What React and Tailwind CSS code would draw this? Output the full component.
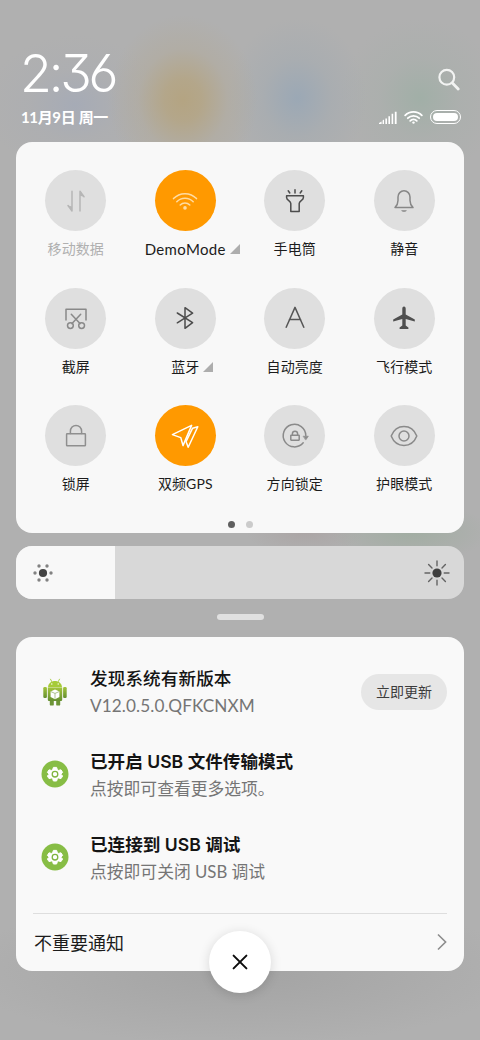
import React from 'react';

const Icon = ({ children, className }) => (
    <svg
        viewBox="0 0 30 30"
        className={`w-[30px] h-[30px] ${className}`}
        fill="none"
        stroke="currentColor"
        strokeWidth="1.5"
        strokeLinecap="round"
        strokeLinejoin="round"
    >
        {children}
    </svg>
);

const DataIcon = () => (
    <Icon className="text-[#b6b6b6]">
        <path d="M11 5.3V25L7 19.5" />
        <path d="M19 25V5.3L23 10.8" />
        <path d="M11 25L7 19.5L11 20.5ZM19 5.3L23 10.8L19 9.8Z" fill="currentColor" stroke="none" />
    </Icon>
);

const WifiIcon = () => (
    <Icon className="text-[#ffdca3]">
        <path d="M3.5 12.6A15.8 15.8 0 0 1 26.5 12.6" />
        <path d="M6.8 15.8A11.2 11.2 0 0 1 23.2 15.8" />
        <path d="M10.2 19A6.8 6.8 0 0 1 19.8 19" />
        <circle cx="15" cy="21.9" r="1.8" fill="currentColor" stroke="none" />
    </Icon>
);

const TorchIcon = () => (
    <Icon className="text-[#4c4c4c]">
        <path d="M15 3.8V7M8.2 4.8L9.8 7M21.8 4.8L20.2 7" />
        <path d="M6.6 9.8H23.4V11.4C23.4 14.6 19.2 14.6 19.2 17.6V25.6H10.8V17.6C10.8 14.6 6.6 14.6 6.6 11.4Z" />
    </Icon>
);

const BellIcon = () => (
    <Icon className="text-[#878787]">
        <path d="M6 21.6C8 19.4 9 17.4 9 14.4V11A6 6.2 0 0 1 21 11V14.4C21 17.4 22 19.4 24 21.6Z" />
        <path d="M12.2 24.2H17.8C17 26.4 13 26.4 12.2 24.2Z" fill="currentColor" stroke="none" />
    </Icon>
);

const ScissorsIcon = () => (
    <Icon className="text-[#898989]">
        <path d="M5 17V6.2H25V17" />
        <path d="M10.3 11.2L19 20.6M19.7 11.2L11 20.6" />
        <circle cx="9.4" cy="22.6" r="2.9" />
        <circle cx="20.6" cy="22.6" r="2.9" />
    </Icon>
);

const BluetoothIcon = () => (
    <Icon className="text-[#4c4c4c]">
        <path d="M7.3 10L22.6 19.6L15 25.3V4.7L22.6 10.2L7.3 19.8" />
    </Icon>
);

const AutoIcon = () => (
    <Icon className="text-[#555555]">
        <path d="M6.2 24.2L15 4.4L23.8 24.2M9.4 16.6H20.6" />
    </Icon>
);

const PlaneIcon = () => (
    <Icon className="text-[#4f4f4f]">
        <path
            d="M15 3.6C16.2 3.6 16.7 4.6 16.7 5.8V11.4L25.8 16.4V18.4L16.7 15.9V22.4L19.4 24.4V25.9H10.6V24.4L13.3 22.4V15.9L4.2 18.4V16.4L13.3 11.4V5.8C13.3 4.6 13.8 3.6 15 3.6Z"
            fill="currentColor"
            stroke="none"
        />
    </Icon>
);

const LockIcon = () => (
    <Icon className="text-[#8f8f8f]">
        <rect x="5.6" y="12.8" width="18.8" height="12" rx="0.6" />
        <path d="M9.4 12.6V10.2A5.6 5.8 0 0 1 20.6 10.2V12.6" />
    </Icon>
);

const GpsIcon = () => (
    <Icon className="text-white">
        <path d="M2.4 13.6L21.6 4.4L13 24.6L10.8 16.6Z" />
        <path d="M22.6 7.2L27.8 5.8L18.2 26.2L16 20.6Z" />
    </Icon>
);

const RotationIcon = () => (
    <Icon className="text-[#8a8a8a]">
        <path d="M23.2 21.8A11.3 11.3 0 1 1 25.8 14.6" />
        <path d="M23.4 15.2H28.4L25.9 18.8Z" fill="currentColor" strokeWidth="0.6" />
        <rect x="10.8" y="14.2" width="8.4" height="5" rx="0.4" />
        <path d="M12.4 14V12.8A2.6 2.6 0 0 1 17.6 12.8V14" />
    </Icon>
);

const EyeIcon = () => (
    <Icon className="text-[#8a8a8a]">
        <path d="M2.2 15C7.2 2.4 22.8 2.4 27.8 15C22.8 27.6 7.2 27.6 2.2 15Z" />
        <circle cx="15" cy="15" r="5" />
    </Icon>
);

const tiles = [
    { label: '移动数据', icon: DataIcon, disabled: true },
    { label: 'DemoMode', icon: WifiIcon, active: true, more: true },
    { label: '手电筒', icon: TorchIcon },
    { label: '静音', icon: BellIcon },
    { label: '截屏', icon: ScissorsIcon },
    { label: '蓝牙', icon: BluetoothIcon, more: true },
    { label: '自动亮度', icon: AutoIcon },
    { label: '飞行模式', icon: PlaneIcon },
    { label: '锁屏', icon: LockIcon },
    { label: '双频GPS', icon: GpsIcon, active: true },
    { label: '方向锁定', icon: RotationIcon },
    { label: '护眼模式', icon: EyeIcon },
];

const Tile = ({ tile }) => (
    <div className="flex flex-col items-center">
        <div className={`w-[61px] h-[61px] rounded-full flex items-center justify-center ${tile.active ? 'bg-[#ff9900]' : 'bg-[#dfdfdf]'}`}>
            <tile.icon />
        </div>
        <div className={`relative mt-2 h-5 leading-5 text-[14px] tracking-[0.1px] whitespace-nowrap ${tile.disabled ? 'text-[#b0b0b0]' : 'text-[#1c1c1c]'}`}>
            <span className={tile.label === 'DemoMode' ? 'text-[15px] tracking-[0.35px]' : ''}>{tile.label}</span>
            {tile.more && (
                <svg viewBox="0 0 10 10" className="absolute left-full top-[5px] ml-1 w-[10px] h-[10px]">
                    <path d="M10 0V10H0Z" fill="#adadad" />
                </svg>
            )}
        </div>
    </div>
);

const AndroidIcon = () => (
    <svg viewBox="0 0 24 28" className="w-6 h-7">
        <defs>
            <linearGradient id="droid" x1="0" y1="0" x2="0" y2="1">
                <stop offset="0" stopColor="#a3c43c" />
                <stop offset="1" stopColor="#658f30" />
            </linearGradient>
        </defs>
        <path d="M7.5 1.2L9 4M16.5 1.2L15 4" stroke="#a3c93a" strokeWidth="0.9" strokeLinecap="round" />
        <path d="M5 9.2C5.4 0.8 18.6 0.8 19 9.2Z" fill="#a6cb38" />
        <circle cx="8.8" cy="6" r="0.7" fill="#fff" />
        <circle cx="15.2" cy="6" r="0.7" fill="#fff" />
        <rect x="0.3" y="9" width="3.6" height="11" rx="1.2" fill="url(#droid)" />
        <rect x="20.1" y="9" width="3.6" height="11" rx="1.2" fill="url(#droid)" />
        <rect x="6.8" y="20" width="4" height="7.6" rx="1.2" fill="#6c9436" />
        <rect x="13.2" y="20" width="4" height="7.6" rx="1.2" fill="#6c9436" />
        <path d="M4.8 9.6H19.2V21.4C19.2 22.4 18.6 23 17.6 23H6.4C5.4 23 4.8 22.4 4.8 21.4Z" fill="url(#droid)" />
        <path d="M12 11.4L16.4 13.4V19L12 21.2L7.6 19V13.4Z" fill="#fff" />
        <path d="M8 13.7L12 15.4L16 13.7M12 15.4V20.8" stroke="#8aa860" strokeWidth="0.7" fill="none" />
    </svg>
);

const SettingsIcon = () => (
    <svg viewBox="0 0 28 28" className="w-7 h-7 -mt-[2px]">
        <circle cx="14" cy="14" r="13.5" fill="#87bd45" />
        <path
            d="M12.4 7.4H15.6L16.4 9.8L17.6 10.4L20 9.8L21.6 12.4L19.9 14.2L21.6 16L20 18.6L17.6 18L16.4 18.6L15.6 21H12.4L11.6 18.6L10.4 18L8 18.6L6.4 16L8.1 14.2L6.4 12.4L8 9.8L10.4 10.4L11.6 9.8Z"
            fill="#fff"
            stroke="#fff"
            strokeLinejoin="round"
        />
        <circle cx="14" cy="14.2" r="2.8" fill="#fff" stroke="#7fb53f" strokeWidth="1.3" />
    </svg>
);

const notifications = [
    { title: '发现系统有新版本', text: 'V12.0.5.0.QFKCNXM', icon: AndroidIcon, action: '立即更新', latin: true },
    { title: '已开启 USB 文件传输模式', text: '点按即可查看更多选项。', icon: SettingsIcon, bold: true },
    { title: '已连接到 USB 调试', text: '点按即可关闭 USB 调试', icon: SettingsIcon, bold: true },
];

const StatusIcons = () => (
    <div className="flex items-center gap-[7px]">
        <svg viewBox="0 0 18 13" className="w-[18px] h-[13px]" fill="#fff">
            <path d="M0 13V12L2.6 10.4V13ZM3.6 13V9.4L5 8.6V13ZM6.4 13V7.4H8V13ZM9.4 13V5.2H11V13ZM12.6 13V2.8H14.2V13ZM15.8 13V0.8H17.6V13Z" />
        </svg>
        <svg viewBox="0 0 19 14" className="w-[19px] h-[14px]" fill="none" stroke="#fff" strokeWidth="1.8" strokeLinecap="round">
            <path d="M1.2 5.4A11.6 11.6 0 0 1 17.8 5.4" />
            <path d="M3.8 8.2A8 8 0 0 1 15.2 8.2" />
            <path d="M6.2 10.8A4.7 4.7 0 0 1 12.8 10.8" />
            <circle cx="9.5" cy="12.6" r="1.2" fill="#fff" stroke="none" />
        </svg>
        <div className="w-[31px] h-[14px] rounded-full border border-white p-[2px]">
            <div className="w-full h-full rounded-full bg-white"></div>
        </div>
    </div>
);

const App = () => {
    return (
        <div className="w-[480px] h-[1040px] overflow-hidden px-4 flex flex-col font-[Lato,'Noto_Sans_CJK_SC',sans-serif] bg-[#b0b0b0] bg-[radial-gradient(ellipse_75px_85px_at_183px_100px,#b4a482_0%,#b4a585e0_25%,#b2aa9a80_60%,#b0b0b000_100%),radial-gradient(ellipse_70px_80px_at_297px_98px,#9ba8b5_0%,#a4abb190_50%,#b0b0b000_100%),radial-gradient(ellipse_90px_70px_at_75px_105px,#a6abb6_0%,#abadb280_50%,#b0b0b000_100%),radial-gradient(ellipse_80px_80px_at_420px_98px,#a1afa7_0%,#a8afab80_50%,#b0b0b000_100%),radial-gradient(ellipse_80px_30px_at_410px_532px,#a1ada2_0%,#b0b0b000_100%),radial-gradient(ellipse_60px_22px_at_305px_532px,#aba5a5_0%,#b0b0b000_100%),radial-gradient(ellipse_280px_75px_at_240px_970px,#a3a3a3_0%,#b0b0b000_100%)]">
            <header className="h-[142px] shrink-0 pt-[46px] pl-[5px] pr-[3px] text-white">
                <div className="flex items-center justify-between h-[56px]">
                    <h1 className="-ml-px font-[Inter,sans-serif] font-light text-[52px] leading-[56px] tracking-[-3.2px] [font-feature-settings:'cv09','cv03']">2:36</h1>
                    <svg viewBox="0 0 24 24" className="w-6 h-6 mt-3 opacity-85" fill="none" stroke="currentColor" strokeLinecap="round">
                        <circle cx="9.8" cy="9.2" r="7.4" strokeWidth="2.2" />
                        <path d="M15.6 15.2L21.2 21" strokeWidth="2.8" />
                    </svg>
                </div>
                <div className="flex items-center justify-between h-5 mt-[5px]">
                    <p className="text-[15px] leading-5 font-bold tracking-[-0.35px]">11月9日 周一</p>
                    <StatusIcons />
                </div>
            </header>

            {/* Quick settings */}
            <section className="h-[391px] shrink-0 rounded-[16px] bg-[#f8f8f8] px-[5px] pt-[28.4px] flex flex-col">
                <div className="grid grid-cols-4 gap-y-[28.4px]">
                    {tiles.map(tile => <Tile key={tile.label} tile={tile} />)}
                </div>
                <div className="flex justify-center gap-[11px] mt-[26.6px]">
                    <span className="w-[7px] h-[7px] rounded-full bg-[#5f5f5f]"></span>
                    <span className="w-[7px] h-[7px] rounded-full bg-[#cbcbcb]"></span>
                </div>
            </section>

            {/* Brightness */}
            <section className="h-[53px] shrink-0 mt-[13px] rounded-[16px] bg-[#d8d8d8] overflow-hidden flex justify-between items-center pr-[14px]">
                <div className="w-[99px] h-full bg-[#f8f8f8] flex items-center pl-[14px]">
                    <svg viewBox="0 0 26 26" className="w-[26px] h-[26px]" fill="#828282">
                        <circle cx="13" cy="13" r="4.1" fill="#444" />
                        <circle cx="5" cy="13" r="1.7" />
                        <circle cx="21" cy="13" r="1.7" />
                        <circle cx="9" cy="6" r="1.7" />
                        <circle cx="17" cy="6" r="1.7" />
                        <circle cx="9" cy="20" r="1.7" />
                        <circle cx="17" cy="20" r="1.7" />
                    </svg>
                </div>
                <svg viewBox="0 0 26 26" className="w-[26px] h-[26px]" stroke="#646464" strokeWidth="1.4" strokeLinecap="round">
                    <circle cx="13" cy="13" r="4.6" fill="#404040" stroke="none" />
                    <path d="M13 1V5.8M13 20.2V25M1 13H5.8M20.2 13H25M4.6 4.6L8 8M18 18L21.4 21.4M21.4 4.6L18 8M4.6 21.4L8 18" />
                </svg>
            </section>

            <div className="w-[47px] h-[6px] shrink-0 mt-[15px] mx-auto rounded-full bg-[#e0e0e0]"></div>

            {/* Notifications */}
            <section className="relative h-[334px] shrink-0 mt-[17px] rounded-[16px] bg-[#f9f9f9] pt-[13px]">
                {notifications.map(item => (
                    <div key={item.title} className="h-[83px] flex items-center pl-[25px] pr-[17px]">
                        <div className="w-7 flex justify-center">
                            <item.icon />
                        </div>
                        <div className="ml-[21px] flex-1 whitespace-nowrap">
                            <p className={`h-[27px] leading-[27px] text-[17.6px] text-[#141414] font-[Inter,'Noto_Sans_CJK_SC',sans-serif] ${item.bold ? 'font-semibold' : 'font-medium tracking-[0.1px]'}`}>{item.title}</p>
                            <p className={`h-[27px] leading-[27px] text-[#757575] ${item.latin ? 'text-[17.2px] tracking-[0.1px]' : 'text-[16.8px]'}`}>{item.text}</p>
                        </div>
                        {item.action && (
                            <button className="w-[86px] h-9 rounded-full bg-[#e6e6e6] text-[14px] text-[#3c3c3c]">{item.action}</button>
                        )}
                    </div>
                ))}
                <div className="mx-[17px] mt-[14px] h-[57px] border-t border-[#dedede] flex items-center justify-between">
                    <span className="pl-px mt-[2px] text-[18px] text-[#1c1c1c]">不重要通知</span>
                    <svg viewBox="0 0 10 18" className="w-[10px] h-[18px]" fill="none" stroke="#8c8c8c" strokeWidth="1.6">
                        <path d="M1 1.5L8.6 9L1 16.5" />
                    </svg>
                </div>
                <button className="absolute left-1/2 -translate-x-1/2 bottom-[-22px] w-[62px] h-[62px] rounded-full bg-white shadow-[0_2px_12px_rgba(0,0,0,0.14)] flex items-center justify-center">
                    <svg viewBox="0 0 16 16" className="w-4 h-4" stroke="#0c0c0c" strokeWidth="2" strokeLinecap="round">
                        <path d="M1.6 1.6L14.4 14.4M14.4 1.6L1.6 14.4" />
                    </svg>
                </button>
            </section>
        </div>
    );
};

export default App;
